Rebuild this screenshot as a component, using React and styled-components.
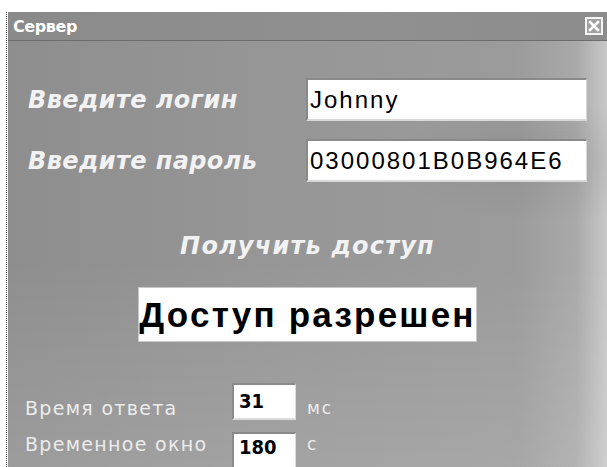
import React from "react";
import styled, { createGlobalStyle } from "styled-components";

const Global = createGlobalStyle`
  html, body {
    margin: 0;
    padding: 0;
    background: #ffffff;
  }
  body {
    font-family: "DejaVu Sans", sans-serif;
  }
`;

const Page = styled.div`
  width: 607px;
  height: 467px;
  box-sizing: border-box;
  padding: 12px 0 0 6px;
  overflow: hidden;
`;

const Frame = styled.div`
  height: 100%;
  border-left: 1px dotted #444;
  padding-left: 1px;
`;

const Window = styled.div`
  height: 100%;
  display: flex;
  flex-direction: column;
  background:
    radial-gradient(ellipse 160px 60px at 540px 150px, rgba(0, 0, 0, 0.07), rgba(0, 0, 0, 0) 100%),
    linear-gradient(to bottom, rgba(255, 255, 255, 0) 55%, rgba(255, 255, 255, 0.12) 100%),
    linear-gradient(to right, #8e8e8e 0%, #969696 45%, #9b9b9b 85%, #aaaaaa 95%, #c8c8c8 100%);
`;

const TitleBar = styled.div`
  height: 28px;
  flex: none;
  display: flex;
  align-items: center;
  justify-content: space-between;
  padding: 0 4px 0 5px;
  background: linear-gradient(to right, #8a8a8a, #909090 60%, #8c8c8c);
  border-bottom: 1px solid #6c6c6c;
`;

const Title = styled.span`
  color: #ffffff;
  font-family: "DejaVu Sans", sans-serif;
  font-weight: bold;
  font-size: 16px;
  letter-spacing: -0.4px;
`;

const CloseButton = styled.div`
  width: 18px;
  height: 18px;
  box-sizing: border-box;
  border: 2px solid #f4f4f4;
  background: #a0a0a0;
  display: flex;
  align-items: center;
  justify-content: center;
`;

const Body = styled.div`
  flex: 1;
  display: flex;
  flex-direction: column;
  padding-top: 37px;
`;

const Fields = styled.div`
  display: flex;
  flex-direction: column;
  gap: 18px;
  padding-left: 20px;
`;

const FieldRow = styled.div`
  display: grid;
  grid-template-columns: 278px 281px;
  align-items: center;
  height: 43px;
`;

const FancyLabel = styled.span`
  color: #f2f2f2;
  font-family: "DejaVu Sans", sans-serif;
  font-weight: bold;
  font-style: italic;
  font-size: 24px;
  letter-spacing: 0.4px;
`;

const TextBox = styled.div`
  height: 43px;
  box-sizing: border-box;
  background: #ffffff;
  border-top: 2px solid #8a8a8a;
  border-left: 2px solid #8a8a8a;
  border-right: 1px solid #d8d8d8;
  border-bottom: 2px solid #d8d8d8;
  display: flex;
  align-items: center;
  padding-left: 2px;
  color: #000;
  font-family: "Liberation Sans", Arial, sans-serif;
  font-size: 24px;
  letter-spacing: 2px;
`;

const Heading = styled(FancyLabel)`
  display: block;
  text-align: center;
  line-height: 26px;
  margin-top: 51px;
  letter-spacing: 1.2px;
`;

const ResultBox = styled.div`
  align-self: center;
  width: 339px;
  height: 55px;
  box-sizing: border-box;
  margin-top: 28px;
  background: #ffffff;
  border: 1px solid #c8c8c8;
  display: flex;
  align-items: center;
  justify-content: center;
  color: #000;
  font-family: "Liberation Sans", Arial, sans-serif;
  font-weight: bold;
  font-size: 35px;
  letter-spacing: 2.2px;
`;

const Stats = styled.div`
  display: flex;
  flex-direction: column;
  gap: 12px;
  margin-top: 41px;
  padding-left: 17px;
`;

const StatRow = styled.div`
  display: grid;
  grid-template-columns: 207px 64px 11px auto;
  height: ${(p) => p.$height}px;
`;

const StatLabel = styled.span`
  color: #ececec;
  font-family: "DejaVu Sans", sans-serif;
  font-weight: 500;
  font-size: 19px;
  line-height: 22px;
  letter-spacing: 1.3px;
  padding-top: ${(p) => p.$offset}px;
`;

const ValueBox = styled.div`
  box-sizing: border-box;
  height: ${(p) => p.$height}px;
  background: #ffffff;
  border-top: 2px solid #8a8a8a;
  border-left: 2px solid #8a8a8a;
  border-right: 1px solid #dcdcdc;
  border-bottom: 2px solid #dcdcdc;
  padding: ${(p) => p.$pad}px 0 0 5px;
  color: #000;
  font-family: "DejaVu Sans Condensed", "DejaVu Sans", sans-serif;
  font-stretch: condensed;
  font-weight: bold;
  font-size: 20px;
  line-height: 22px;
`;

const Unit = styled.span`
  grid-column: 4;
  color: #ececec;
  font-family: "DejaVu Sans", sans-serif;
  font-size: 17px;
  line-height: 22px;
  letter-spacing: 2px;
  padding-top: ${(p) => p.$offset}px;
`;

const CloseIcon = () => (
  <svg width="12" height="12" viewBox="0 0 12 12">
    <path d="M2 2 L10 10 M10 2 L2 10" stroke="#ffffff" strokeWidth="2.6" strokeLinecap="square" />
  </svg>
);

const stats = [
  { label: "Время ответа", value: "31", unit: "мс", height: 37, offset: 14, pad: 5 },
  { label: "Временное окно", value: "180", unit: "с", height: 37, offset: 1, pad: 2 },
];

export default function App() {
  return (
    <>
      <Global />
      <Page>
        <Frame>
          <Window>
            <TitleBar>
              <Title>Сервер</Title>
              <CloseButton>
                <CloseIcon />
              </CloseButton>
            </TitleBar>
            <Body>
              <Fields>
                <FieldRow>
                  <FancyLabel>Введите логин</FancyLabel>
                  <TextBox>Johnny</TextBox>
                </FieldRow>
                <FieldRow>
                  <FancyLabel>Введите пароль</FancyLabel>
                  <TextBox>03000801B0B964E6</TextBox>
                </FieldRow>
              </Fields>
              <Heading>Получить доступ</Heading>
              <ResultBox>Доступ разрешен</ResultBox>
              <Stats>
                {stats.map((s) => (
                  <StatRow key={s.label} $height={s.height}>
                    <StatLabel $offset={s.offset}>{s.label}</StatLabel>
                    <ValueBox $height={s.height} $pad={s.pad}>{s.value}</ValueBox>
                    <Unit $offset={s.offset}>{s.unit}</Unit>
                  </StatRow>
                ))}
              </Stats>
            </Body>
          </Window>
        </Frame>
      </Page>
    </>
  );
}
